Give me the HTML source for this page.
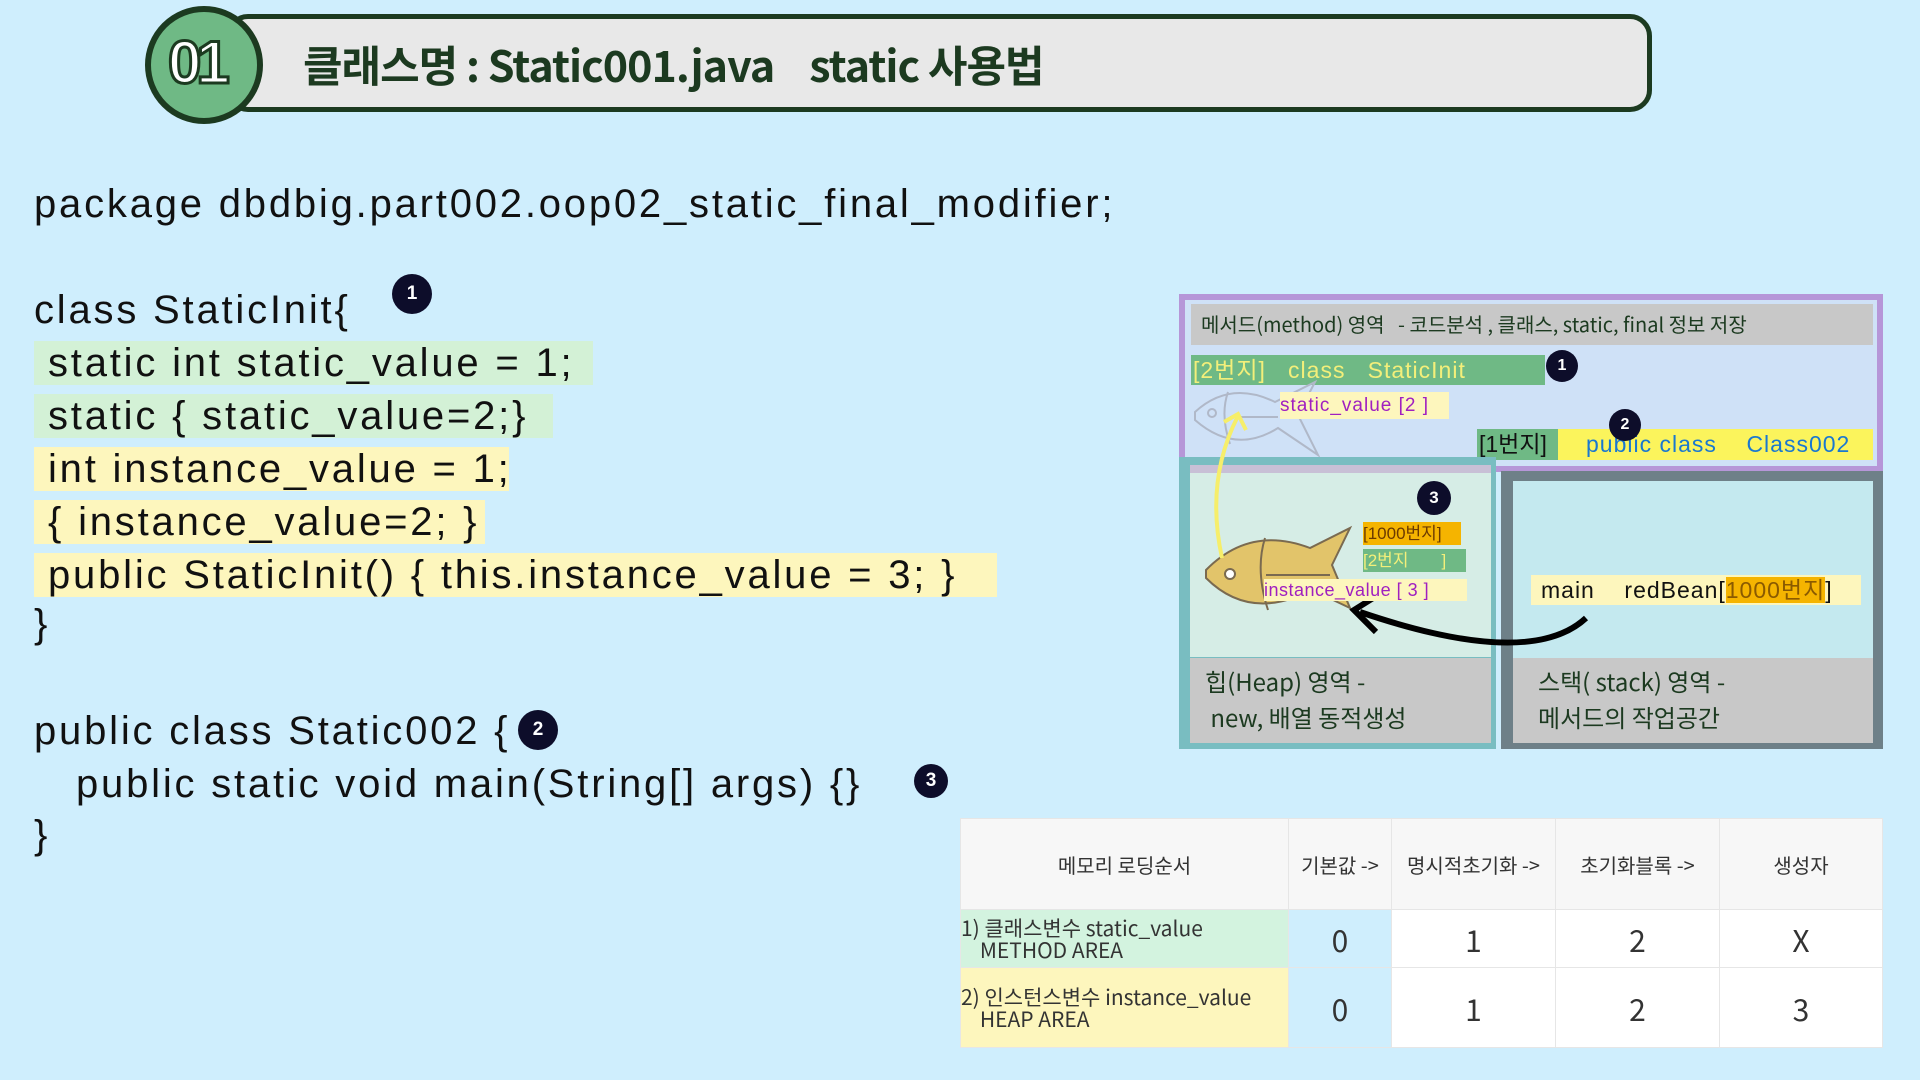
<!DOCTYPE html>
<html><head><meta charset="utf-8">
<style>
*{margin:0;padding:0;box-sizing:border-box}
body{width:1920px;height:1080px;background:#cfeefd;position:relative;overflow:hidden;font-family:"Liberation Sans","Noto Sans CJK KR",sans-serif}
.a{position:absolute;white-space:pre}
.code{position:absolute;left:34px;font-size:40px;letter-spacing:2.8px;color:#111;line-height:44px;height:44px;white-space:pre;padding-left:14px}
.b{position:absolute;border-radius:50%;background:#0d0d2a;color:#fff;text-align:center;font-size:19px;font-weight:bold}
td{border:1px solid #e6e6e6;text-align:center;font-family:"Noto Sans CJK KR",sans-serif;color:#333}
</style></head><body>
<!-- header -->
<div class="a" style="left:226px;top:14px;width:1426px;height:98px;background:#e8e8e8;border:5px solid #1c3a20;border-radius:22px"></div>
<div class="a" style="left:145px;top:6px;width:118px;height:118px;border-radius:50%;background:#6fb985;border:6px solid #1c3a20"></div>
<div class="a" style="left:168px;top:28px;font-size:60px;font-weight:bold;color:#fff;-webkit-text-stroke:3px #1c3a20;font-family:'Liberation Sans',sans-serif;letter-spacing:-5px">01</div>
<div class="a" style="left:303px;top:34px;font-size:43px;font-weight:bold;color:#1c3a20;font-family:'Noto Sans CJK KR',sans-serif;line-height:60px;letter-spacing:-1px">클래스명 : Static001.java&nbsp;&nbsp;&nbsp;&nbsp;static 사용법</div>

<!-- code -->
<div class="code" style="top:182px;padding-left:0">package dbdbig.part002.oop02_static_final_modifier;</div>
<div class="code" style="top:288px;padding-left:0">class StaticInit{</div>
<div class="b" style="left:392px;top:274px;width:40px;height:40px;line-height:40px">1</div>
<div class="code" style="top:341px;width:559px;background:#d3f1d6">static int static_value = 1;</div>
<div class="code" style="top:394px;width:519px;background:#d3f1d6">static { static_value=2;}</div>
<div class="code" style="top:447px;width:475px;background:#fdf6bd">int instance_value = 1;</div>
<div class="code" style="top:500px;width:451px;background:#fdf6bd">{ instance_value=2; }</div>
<div class="code" style="top:553px;width:963px;background:#fdf6bd">public StaticInit() { this.instance_value = 3; }</div>
<div class="code" style="top:602px;padding-left:0">}</div>
<div class="code" style="top:709px;padding-left:0">public class Static002 {</div>
<div class="b" style="left:518px;top:710px;width:40px;height:40px;line-height:40px">2</div>
<div class="code" style="top:762px;padding-left:42px">public static void main(String[] args) {}</div>
<div class="b" style="left:914px;top:764px;width:34px;height:34px;line-height:34px">3</div>
<div class="code" style="top:813px;padding-left:0">}</div>

<!-- diagram -->
<div class="a" style="left:1179px;top:294px;width:704px;height:178px;background:#cfe1f7;border:6px solid #b696d8"></div>
<div class="a" style="left:1191px;top:304px;width:682px;height:41px;background:#c8c8c8"></div>
<div class="a" style="left:1201px;top:307px;font-size:20px;color:#1c3a20;font-family:'Noto Sans CJK KR',sans-serif;line-height:34px">메서드(method) 영역&nbsp;&nbsp; - 코드분석 , 클래스, static, final 정보 저장</div>
<div class="a" style="left:1191px;top:355px;width:354px;height:30px;background:#6fb985;color:#f3ef7a;font-size:23px;line-height:30px;padding-left:2px;letter-spacing:1px">[2번지]   class   StaticInit</div>
<div class="b" style="left:1546px;top:350px;width:32px;height:32px;line-height:32px;font-size:16px">1</div>
<svg class="a" style="left:1190px;top:380px" width="140" height="80" viewBox="0 0 140 80">
<path d="M5 32 Q40 0 85 22 L125 2 L108 35 L128 75 L88 48 Q45 75 5 40 Z" fill="none" stroke="#b0b8c8" stroke-width="2"/>
<path d="M38 12 Q30 35 40 64 M40 37 L88 37" fill="none" stroke="#b0b8c8" stroke-width="2"/>
<circle cx="22" cy="33" r="4" fill="none" stroke="#b0b8c8" stroke-width="2"/>
</svg>
<div class="a" style="left:1280px;top:392px;width:169px;height:27px;background:#fdf6bd;color:#a020c0;font-size:19px;line-height:27px;letter-spacing:1px">static_value [2 ]</div>
<div class="a" style="left:1477px;top:429px;width:82px;height:31px;background:#6fb985;color:#111;font-size:23px;line-height:31px;padding-left:2px">[1번지]</div>
<div class="a" style="left:1558px;top:429px;width:315px;height:31px;background:#fbf45c;color:#1a78d0;font-size:23px;line-height:31px;padding-left:28px;letter-spacing:1px">public class    Class002</div>
<div class="b" style="left:1609px;top:409px;width:32px;height:32px;line-height:32px;font-size:16px">2</div>

<div class="a" style="left:1179px;top:457px;width:317px;height:292px;background:#79bdc1"></div>
<div class="a" style="left:1190px;top:465px;width:301px;height:192px;background:#d6ede6"></div>
<div class="a" style="left:1190px;top:465px;width:301px;height:8px;background:#c8c0d6"></div>
<div class="a" style="left:1190px;top:658px;width:301px;height:85px;background:#c8c8c8"></div>
<div class="a" style="left:1205px;top:663px;font-size:24px;color:#1c3a20;font-family:'Noto Sans CJK KR',sans-serif;line-height:36px">힙(Heap) 영역 -
 new, 배열 동적생성</div>

<div class="a" style="left:1501px;top:471px;width:382px;height:278px;background:#6e8088"></div>
<div class="a" style="left:1513px;top:481px;width:360px;height:177px;background:#c4e9ef"></div>
<div class="a" style="left:1513px;top:658px;width:360px;height:85px;background:#c8c8c8"></div>
<div class="a" style="left:1538px;top:663px;font-size:24px;color:#1c3a20;font-family:'Noto Sans CJK KR',sans-serif;line-height:36px">스택( stack) 영역 -
메서드의 작업공간</div>
<div class="a" style="left:1531px;top:575px;width:330px;height:30px;background:#fdf6bd;color:#111;font-size:23px;line-height:30px;padding-left:10px;letter-spacing:1px">main    redBean[<span style="background:#f5b400;color:#8a5a00">1000번지</span>]</div>

<div class="b" style="left:1417px;top:481px;width:34px;height:34px;line-height:34px;font-size:17px">3</div>
<div class="a" style="left:1363px;top:522px;width:98px;height:23px;background:#f5b400;color:#6b3a00;font-size:17px;line-height:23px">[1000번지]</div>
<div class="a" style="left:1363px;top:549px;width:103px;height:23px;background:#6fb985;color:#f3ef7a;font-size:17px;line-height:23px">[2번지&nbsp;&nbsp;&nbsp;&nbsp;&nbsp;&nbsp;&nbsp;]</div>
<svg class="a" style="left:1200px;top:400px" width="420" height="260" viewBox="0 0 420 260">
<path d="M6 170 Q50 125 110 148 L150 128 L132 165 L150 208 L112 190 Q50 222 6 178 Z" fill="#e2c46a" stroke="#7a6a50" stroke-width="2"/>
<path d="M65 138 Q55 170 68 210 M66 175 L130 175" fill="none" stroke="#7a6a50" stroke-width="2"/>
<circle cx="30" cy="174" r="5" fill="#fff" stroke="#7a6a50" stroke-width="2"/>
<path d="M22 158 Q5 80 38 16" fill="none" stroke="#f6ee6a" stroke-width="4"/>
<path d="M24 22 L38 14 L46 30" fill="none" stroke="#f6ee6a" stroke-width="4"/>
<path d="M386 218 Q330 270 160 212" fill="none" stroke="#000" stroke-width="6"/>
<path d="M178 195 L154 210 L176 232" fill="none" stroke="#000" stroke-width="6"/>
</svg>
<div class="a" style="left:1264px;top:579px;width:203px;height:22px;background:#fdf6bd;color:#a020c0;font-size:18px;line-height:22px;letter-spacing:0.5px">instance_value [ 3 ]</div>

<!-- table -->
<table class="a" style="left:960px;top:818px;width:923px;height:229px;border-collapse:collapse;white-space:normal">
<tr style="height:91px;background:#f7f7f7;font-size:20px"><td style="width:328px">메모리 로딩순서</td><td style="width:103px">기본값 -&gt;</td><td style="width:164px">명시적초기화 -&gt;</td><td style="width:164px">초기화블록 -&gt;</td><td>생성자</td></tr>
<tr style="height:58px;font-size:30px;background:#fff"><td style="background:#d3f3df;text-align:left;font-size:21px;line-height:22px">1) 클래스변수 static_value<br>&nbsp;&nbsp;&nbsp;&nbsp;METHOD AREA</td><td style="background:#cfeefd">0</td><td>1</td><td>2</td><td>X</td></tr>
<tr style="height:80px;font-size:30px;background:#fff"><td style="background:#fdf6bd;text-align:left;font-size:21px;line-height:22px">2) 인스턴스변수 instance_value<br>&nbsp;&nbsp;&nbsp;&nbsp;HEAP AREA</td><td style="background:#cfeefd">0</td><td>1</td><td>2</td><td>3</td></tr>
</table>
</body></html>
